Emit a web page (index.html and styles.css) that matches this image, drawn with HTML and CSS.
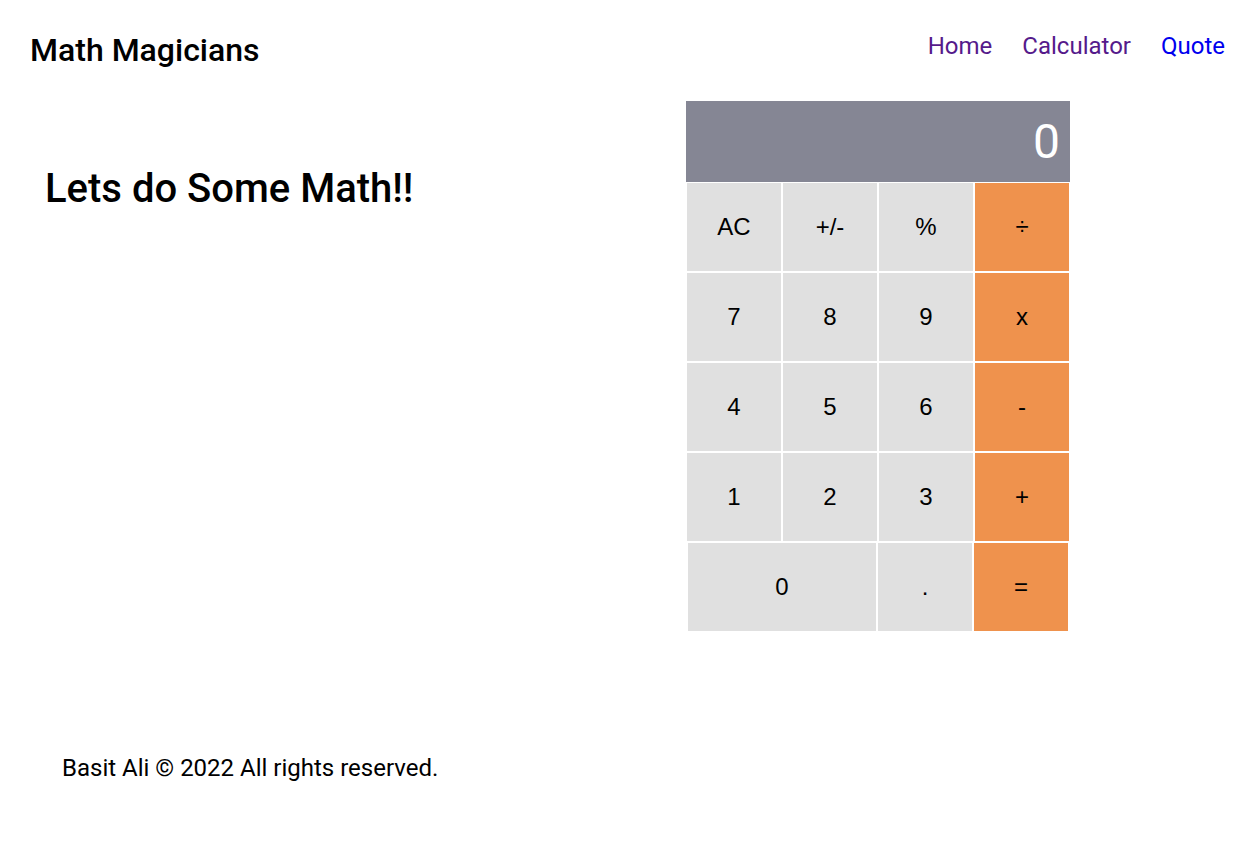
FILE: index.html
```html
<!DOCTYPE html>
<html lang="en">
<head>
<meta charset="utf-8">
<title>Math Magicians</title>
<link rel="stylesheet" href="styles.css">
</head>
<body>
<header class="header">
  <h1 class="logo">Math Magicians</h1>
  <nav class="nav">
    <a class="nav-link visited" href="#">Home</a>
    <a class="nav-link visited" href="#">Calculator</a>
    <a class="nav-link" href="#">Quote</a>
  </nav>
</header>
<main class="main">
  <h2 class="intro">Lets do Some Math!!</h2>
  <div class="calculator">
    <div class="display">0</div>
    <div class="keys">
      <button class="key">AC</button>
      <button class="key">+/-</button>
      <button class="key">%</button>
      <button class="key op">÷</button>
      <button class="key">7</button>
      <button class="key">8</button>
      <button class="key">9</button>
      <button class="key op">x</button>
      <button class="key">4</button>
      <button class="key">5</button>
      <button class="key">6</button>
      <button class="key op">-</button>
      <button class="key">1</button>
      <button class="key">2</button>
      <button class="key">3</button>
      <button class="key op">+</button>
      <button class="key zero">0</button>
      <button class="key last">.</button>
      <button class="key op last">=</button>
    </div>
  </div>
</main>
<footer class="footer">Basit Ali © 2022 All rights reserved.</footer>
</body>
</html>
```
FILE: styles.css
```css
* { box-sizing: border-box; }
html, body { margin: 0; padding: 0; background: #fff; }
body {
  font-family: Roboto, "Liberation Sans", Arial, sans-serif;
  color: #000;
}
.header {
  display: flex;
  justify-content: space-between;
  align-items: flex-start;
  padding: 31px 32px 0 30px;
}
.logo {
  margin: 0;
  font-size: 32px;
  font-weight: 500;
  line-height: 38px;
}
.nav {
  display: flex;
  gap: 30px;
  padding-top: 1px;
}
.nav-link {
  font-size: 24px;
  line-height: 28px;
  text-decoration: none;
  color: #0000ee;
}
.nav-link.visited { color: #551a8b; }
.main {
  display: flex;
  align-items: flex-start;
  margin-top: 32px;
  padding: 0 187px 0 45px;
}
.intro {
  flex: 1;
  margin: 64px 0 0;
  font-size: 40px;
  font-weight: 500;
  line-height: 47px;
}
.calculator {
  width: 384px;
}
.display {
  height: 81px;
  background: #858694;
  color: #fff;
  font-size: 48px;
  line-height: 56px;
  text-align: right;
  padding: 13px 10px 0 0;
}
.keys {
  display: grid;
  grid-template-columns: repeat(4, 96px);
  grid-auto-rows: 90px;
}
.key {
  margin: 0;
  border: 1px solid #fff;
  border-radius: 0;
  background: #e0e0e0;
  color: #000;
  font-family: "Liberation Sans", Arial, sans-serif;
  font-size: 24px;
  padding: 0;
}
.key.op { background: #ef924d; }
.key.zero {
  grid-column: span 2;
  border-left-width: 2px;
  border-right-width: 2px;
}
.key.last {
  border-left-width: 0;
  border-right-width: 2px;
}
.footer {
  margin-top: 122px;
  padding-left: 62px;
  font-size: 24px;
  line-height: 28px;
}
```
